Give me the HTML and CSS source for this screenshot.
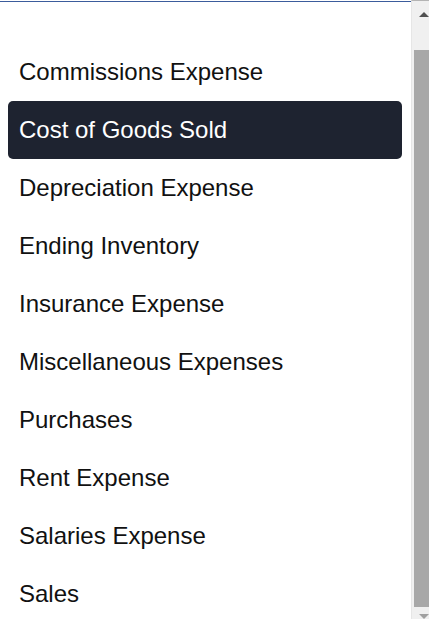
FILE: index.html
```html
<!DOCTYPE html>
<html lang="en">
<head>
    <meta charset="UTF-8">
    <meta name="viewport" content="width=device-width, initial-scale=1.0">
    <title>Account Picker</title>
    <link rel="stylesheet" href="styles.css">
</head>
<body>
    <div class="frame">
        <div class="panel">
            <ul class="option-list">
                <li class="option">Commissions Expense</li>
                <li class="option selected">Cost of Goods Sold</li>
                <li class="option">Depreciation Expense</li>
                <li class="option">Ending Inventory</li>
                <li class="option">Insurance Expense</li>
                <li class="option">Miscellaneous Expenses</li>
                <li class="option">Purchases</li>
                <li class="option">Rent Expense</li>
                <li class="option">Salaries Expense</li>
                <li class="option">Sales</li>
            </ul>
        </div>
        <div class="scrollbar">
            <div class="arrow arrow-up"></div>
            <div class="thumb"></div>
            <div class="arrow arrow-down"></div>
        </div>
    </div>
</body>
</html>
```

FILE: styles.css
```css
html, body {
    margin: 0;
    padding: 0;
    height: 100%;
    overflow: hidden;
    background-color: white;
    font-family: "Liberation Sans", Arial, sans-serif;
}

.frame {
    display: flex;
    height: 619px;
}

.panel {
    width: 411px;
    padding-top: 1px;
}

.option-list {
    list-style: none;
    margin: 0;
    padding: 41px 9px 0 8px;
    border-top: 1px solid #3b5c9c;
}

.option {
    height: 58px;
    line-height: 57px;
    padding-left: 11px;
    font-size: 24px;
    color: #111;
    border-radius: 5px;
}

.option.selected {
    background-color: #1e2330;
    color: white;
}

.scrollbar {
    width: 17px;
    flex-shrink: 0;
    background-color: #f0f0f0;
    border-left: 1px solid #e6e6e6;
    border-top: 1px solid #b4b4b4;
    display: flex;
    flex-direction: column;
    align-items: flex-end;
}

.arrow {
    width: 0;
    height: 0;
    border-left: 5px solid transparent;
    border-right: 5px solid transparent;
    align-self: flex-end;
}

.arrow-up {
    border-bottom: 5px solid #505050;
    margin-top: 11px;
}

.arrow-down {
    border-top: 5px solid #a0a0a0;
    margin-top: 7px;
}

.thumb {
    width: 15px;
    height: 557px;
    margin-top: 33px;
    background-color: #a8a8a8;
}
```
